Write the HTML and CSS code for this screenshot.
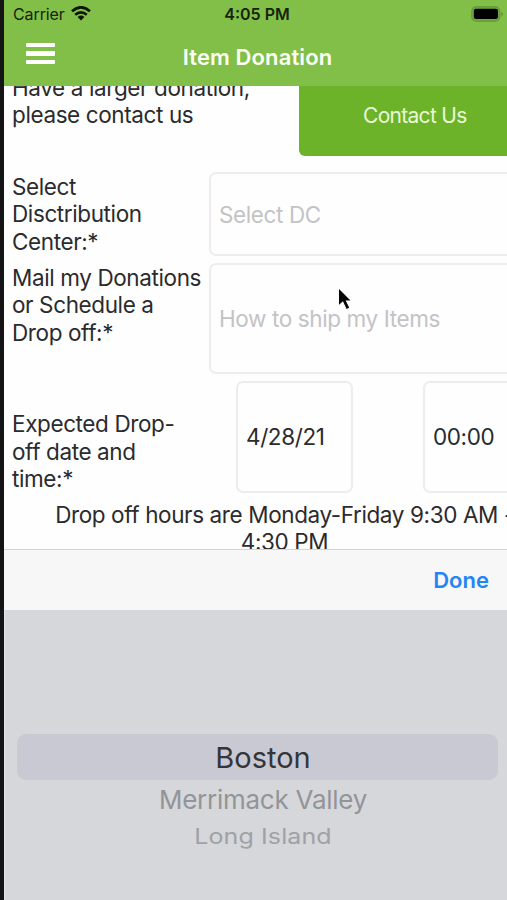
FILE: index.html
```html
<!DOCTYPE html>
<html lang="en">
<head>
<meta charset="utf-8">
<title>Item Donation</title>
<link rel="stylesheet" href="styles.css">
</head>
<body>
<main class="screen">
  <header class="header">
    <div class="status">
      <div class="carrier"><span>Carrier</span>
        <svg class="wifi" width="20" height="15" viewBox="0 0 20 15"><path d="M1 5.2Q10-2.6 19 5.2M4.2 8.7Q10 3.9 15.8 8.7" fill="none" stroke="#0c1604" stroke-width="2.7"/><path d="M6.6 11Q10 8.2 13.4 11L10 14.5Z" fill="#0c1604"/></svg>
      </div>
      <time class="clock">4:05 PM</time>
      <svg class="battery" width="34" height="16" viewBox="0 0 34 16"><rect x=".8" y=".8" width="28" height="14.4" rx="4.5" fill="#75aa42" stroke="#64953a" stroke-width="1.2"/><rect x="2.8" y="2.8" width="24.2" height="10.2" rx="2" fill="#000"/><path d="M30.2 5.4Q33.6 8 30.2 10.6Z" fill="#64953a"/></svg>
    </div>
    <div class="nav">
      <button class="menu" aria-label="Menu"><i></i><i></i><i></i></button>
      <h1 class="title">Item Donation</h1>
      <span></span>
    </div>
  </header>
  <section class="viewport">
    <form class="form">
      <div class="row row-contact">
        <p class="label">Have a larger donation,<br>please contact us</p>
        <button type="button" class="contact">Contact Us</button>
      </div>
      <div class="row row-center">
        <p class="label">Select<br>Disctribution<br>Center:*</p>
        <div class="field hint">Select DC</div>
      </div>
      <div class="row row-ship">
        <p class="label">Mail my Donations<br>or Schedule a<br>Drop off:*</p>
        <div class="field hint">How to ship my Items</div>
      </div>
      <div class="row row-date">
        <p class="label">Expected Drop-<br>off date and<br>time:*</p>
        <div class="field date">4/28/21</div>
        <div class="field time">00:00</div>
      </div>
      <p class="hours">Drop off hours are Monday-Friday 9:30 AM -<br>4:30 PM</p>
    </form>
    <svg class="pointer" width="20" height="26" viewBox="0 0 18 24"><path d="M2 1.5V18.5L6 15L9.3 21.8L12.6 20.2L9.5 13.8H14.2Z" fill="#080808" stroke="#fff" stroke-width="1"/></svg>
  </section>
  <div class="toolbar"><button class="done">Done</button></div>
  <section class="picker">
    <div class="option selected"><span>Boston</span></div>
    <div class="option near"><span>Merrimack Valley</span></div>
    <div class="option far"><span>Long Island</span></div>
  </section>
</main>
</body>
</html>
```
FILE: styles.css
```css
* { box-sizing: border-box; }
body {
  margin: 0;
  width: 507px;
  height: 900px;
  overflow: hidden;
  display: flex;
  background: #fefefe;
  font-family: Inter, "Liberation Sans", sans-serif;
  color: #2b2b2d;
}
button { border: 0; padding: 0; background: none; font: inherit; letter-spacing: inherit; }
p, h1 { margin: 0; }
.screen {
  flex: none;
  width: 510px;
  height: 900px;
  border-left: 4px solid #141416;
  display: flex;
  flex-direction: column;
}
.header { height: 86px; background: #82bf49; flex: none; }
.status {
  height: 27px;
  padding: 0 9px;
  display: grid;
  grid-template-columns: 1fr auto 1fr;
  align-items: center;
  font-size: 16px;
  color: #16240b;
}
.carrier { display: flex; align-items: center; gap: 6px; letter-spacing: -.1px; }
.clock { font-weight: 600; }
.battery { justify-self: end; margin-right: -4px; }
.nav {
  height: 59px;
  padding: 0 21px 0 22px;
  display: grid;
  grid-template-columns: 1fr auto 1fr;
  align-items: center;
}
.menu { width: 29px; display: flex; flex-direction: column; gap: 4px; margin-top: -6px; }
.menu i { height: 4.4px; background: #fff; border-radius: 1px; }
.title { color: #fbfff5; font-size: 22px; font-weight: 600; line-height: 28px; letter-spacing: .12px; }
.viewport { position: relative; height: 463px; flex: none; overflow: hidden; background: #fefefe; }
.form { margin-top: -13px; width: 560px; padding-left: 8px; font-size: 22.5px; line-height: 27.5px; letter-spacing: -.39px; }
.row { display: flex; white-space: nowrap; }
.label { width: 197px; flex: none; }
.row-contact { height: 83px; margin-bottom: 16px; }
.row-contact .label { width: 287px; padding-top: .5px; }
.contact { flex: 1; border-radius: 6px; background: #6db32a; color: #e9f8d6; text-align: left; padding: 3px 0 0 64px; font-size: 21px; letter-spacing: -.7px; }
.field { border: 2px solid #ededee; border-radius: 7px; display: flex; align-items: center; padding-left: 8px; }
.hint { flex: 1; color: #c3c3c5; padding-top: 1px; }
.row-center { height: 84px; margin-bottom: 7px; }
.row-center .label, .row-ship .label { padding-top: .5px; }
.row-ship { height: 111px; margin-bottom: 7px; }
.row-date { height: 112px; margin-bottom: 7px; }
.row-date .label { width: 224px; padding-top: 29px; }
.date { width: 117px; margin-right: 70px; }
.time { width: 130px; }
.hours { text-align: center; white-space: nowrap; width: 545px; line-height: 27px; padding-top: .5px; }
.pointer { position: absolute; left: 332px; top: 200px; }
.toolbar {
  height: 61px;
  flex: none;
  border-top: 1px solid #d4d4d6;
  background: #f7f7f8;
  display: flex;
  align-items: center;
  justify-content: flex-end;
  padding-right: 21px;
}
.done { color: #2485f6; font-size: 22px; font-weight: 600; }
.picker { flex: 1; background: #d6d7db; padding: 124px 12px 0; border-left: 1px solid #e2e3e6; }
.option { display: flex; justify-content: center; align-items: center; padding-left: 11px; }
.selected { height: 46px; border-radius: 9px; background: #c9c9d3; font-size: 29px; color: #343539; }
.near { height: 39px; font-size: 26px; letter-spacing: -.25px; color: #939498; }
.far { height: 33px; font-size: 25px; letter-spacing: .1px; color: #a0a1a5; }
.far span { transform: scaleY(.84); }
```
